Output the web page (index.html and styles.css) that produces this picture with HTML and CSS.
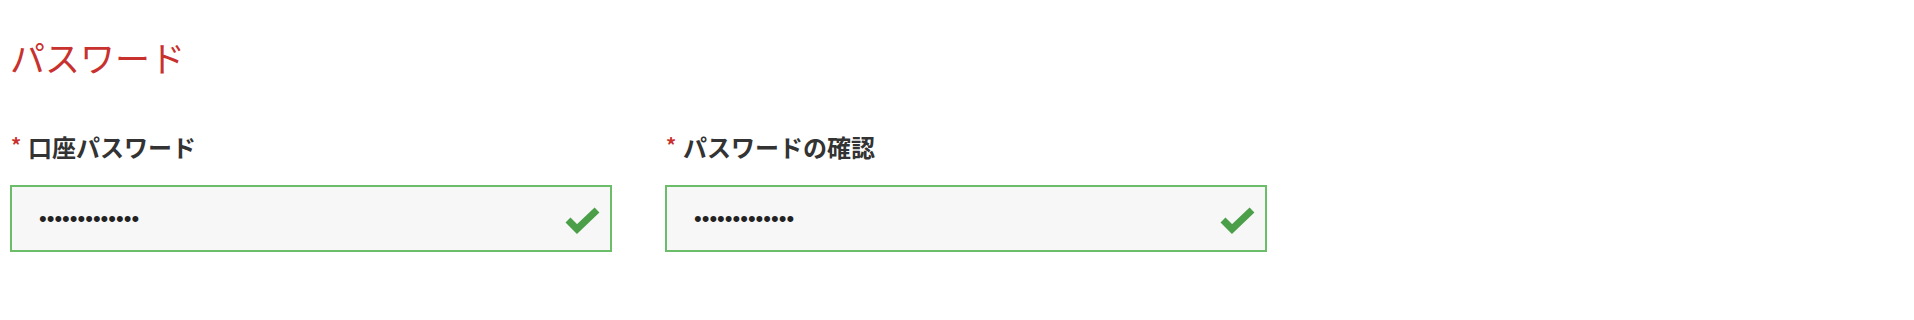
FILE: index.html
```html
<!DOCTYPE html>
<html lang="ja">
<head>
  <meta charset="UTF-8" />
  <meta name="viewport" content="width=device-width, initial-scale=1.0"/>
  <title>パスワード</title>
  <link rel="stylesheet" href="styles.css">
</head>
<body>
  <div class="section">
    <h2 class="section-title">パスワード</h2>
    <div class="fields">
      <div class="field">
        <label class="field-label" for="pw"><span class="req">*</span>口座パスワード</label>
        <div class="input-wrap">
          <input id="pw" class="input" type="password" value="abcdefghijklm">
          <svg class="check" viewBox="0 0 36 28" width="36" height="28">
            <polyline points="3,14 12,23 32,4" />
          </svg>
        </div>
      </div>
      <div class="field">
        <label class="field-label" for="pw2"><span class="req">*</span>パスワードの確認</label>
        <div class="input-wrap">
          <input id="pw2" class="input" type="password" value="abcdefghijklm">
          <svg class="check" viewBox="0 0 36 28" width="36" height="28">
            <polyline points="3,14 12,23 32,4" />
          </svg>
        </div>
      </div>
    </div>
  </div>
</body>
</html>
```

FILE: styles.css
```css
:root {
  --red: #c8312d;
  --text: #333;
  --green-border: #6cbd6a;
  --green: #4a9f48;
  --input-bg: #f7f7f7;
}

* {
  box-sizing: border-box;
}

body {
  margin: 0;
  background: #fff;
  font-family: "Noto Sans CJK JP", "Noto Sans", sans-serif;
  color: var(--text);
}

.section {
  padding: 37px 10px 0 10px;
}

.section-title {
  margin: 0;
  font-size: 35px;
  font-weight: 400;
  line-height: 40px;
  color: var(--red);
}

.fields {
  display: flex;
  gap: 53px;
  margin-top: 55px;
}

.field {
  width: 602px;
}

.field-label {
  display: flex;
  align-items: center;
  font-size: 24px;
  font-weight: 700;
  line-height: 30px;
}

.req {
  color: var(--red);
  font-size: 20px;
  width: 18px;
  padding-left: 1px;
  margin-top: -4px;
}

.input-wrap {
  position: relative;
  margin-top: 23px;
}

.input {
  display: block;
  width: 100%;
  height: 67px;
  border: 2px solid var(--green-border);
  background: var(--input-bg);
  padding: 0 60px 0 27px;
  font-family: "Liberation Sans", sans-serif;
  font-size: 22px;
  color: #222;
  outline: none;
}

.check {
  position: absolute;
  right: 11px;
  top: 21px;
}

.check polyline {
  fill: none;
  stroke: var(--green);
  stroke-width: 7;
}
```
